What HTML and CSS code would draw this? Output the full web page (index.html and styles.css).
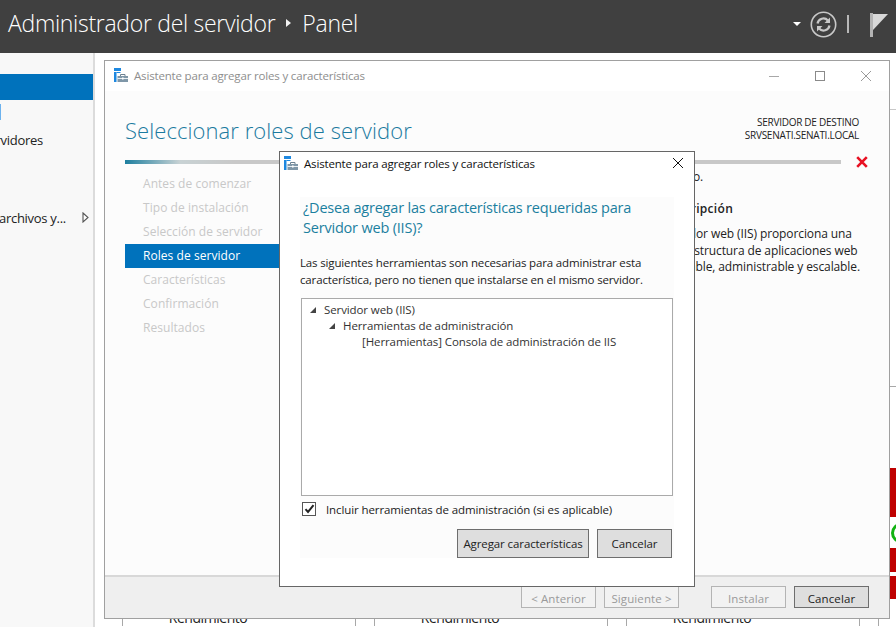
FILE: index.html
```html
<!DOCTYPE html>
<html lang="es">
<head>
<meta charset="utf-8">
<title>Administrador del servidor</title>
<link rel="stylesheet" href="styles.css">
</head>
<body>
<svg class="defs" width="0" height="0" aria-hidden="true">
  <symbol id="wizicon" viewBox="0 0 14 14">
    <rect x="0" y="0" width="7" height="3" fill="#1e88e0"/>
    <rect x="0" y="4" width="2.5" height="10" fill="#1e88e0"/>
    <rect x="2.5" y="4" width="4" height="1" fill="#1e88e0"/>
    <rect x="3.5" y="8" width="10.5" height="6" fill="#7f97a8"/>
    <rect x="3.5" y="10" width="10.5" height="1" fill="#e8eef2"/>
    <path d="M6.5 8V6.5h4.5V8" fill="none" stroke="#6d8292" stroke-width="1"/>
    <rect x="8" y="9.5" width="1.6" height="2" fill="#fff"/>
  </symbol>
</svg>

<header class="topbar">
  <div class="crumbs">
    <span class="crumb">Administrador del servidor</span>
    <span class="crumb-sep"></span>
    <span class="crumb">Panel</span>
  </div>
  <div class="tools">
    <span class="caret"></span>
    <svg class="refresh" width="27" height="27" viewBox="0 0 27 27">
      <circle cx="13.5" cy="13.5" r="12.2" fill="none" stroke="#c8c8c8" stroke-width="1.6"/>
      <path d="M7.5 12.5a6 6 0 0 1 10.4-3" fill="none" stroke="#c8c8c8" stroke-width="2.2"/>
      <path d="M20 6.5v5.5h-5.5z" fill="#c8c8c8"/>
      <path d="M19.5 14.5a6 6 0 0 1-10.4 3" fill="none" stroke="#c8c8c8" stroke-width="2.2"/>
      <path d="M7 20.5v-5.5h5.5z" fill="#c8c8c8"/>
    </svg>
    <span class="tool-sep"></span>
    <svg class="flag" width="18" height="25" viewBox="0 0 18 25">
      <rect x="0" y="0" width="3" height="24" fill="#b4b4b4"/>
      <path d="M3 1H18L3 17z" fill="#d8d8d8"/>
    </svg>
  </div>
</header>

<div class="workspace">
  <nav class="sidebar">
    <div class="side-row side-active"></div>
    <div class="side-row side-local"><span class="side-mark"></span></div>
    <div class="side-row side-text"><span class="side-label side-label-a">Todos los servidores</span></div>
    <div class="side-row side-text side-files">
      <span class="side-label side-label-b">Servicios de archivos y...</span>
      <svg class="side-arrow" width="7" height="11" viewBox="0 0 7 11"><path d="M1 1L6 5.5L1 10z" fill="#fff" stroke="#555" stroke-width="1.1"/></svg>
    </div>
  </nav>
  <main class="dashboard">
    <div class="dash-top"></div>
    <div class="tiles">
      <div class="tile"><div class="tile-name">Rendimiento</div></div>
      <div class="tile"><div class="tile-name">Rendimiento</div></div>
      <div class="tile"><div class="tile-name">Rendimiento</div></div>
      <div class="tile tile-status">
        <div class="st-red st-a"></div>
        <div class="st-ok"><span class="st-ring"></span></div>
        <div class="st-red st-b"></div>
        <div class="st-red st-c"></div>
      </div>
    </div>
  </main>
</div>

<section class="wizard">
  <div class="win-title">
    <svg class="win-icon" width="14" height="14"><use href="#wizicon"/></svg>
    <span class="win-caption">Asistente para agregar roles y características</span>
    <div class="win-controls">
      <svg width="12" height="12" viewBox="0 0 12 12"><path d="M1 6.5H11" stroke="#a8a8a8" fill="none"/></svg>
      <svg width="12" height="12" viewBox="0 0 12 12"><rect x="1.5" y="1.5" width="9" height="9" stroke="#8a8a8a" fill="none"/></svg>
      <svg width="12" height="12" viewBox="0 0 12 12"><path d="M1 1L11 11M11 1L1 11" stroke="#9a9a9a" fill="none"/></svg>
    </div>
  </div>
  <div class="win-body">
    <div class="head-row">
      <h1 class="page-title">Seleccionar roles de servidor</h1>
      <div class="target">SERVIDOR DE DESTINO<br>SRVSENATI.SENATI.LOCAL</div>
    </div>
    <div class="progress-row">
      <div class="progress"></div>
      <svg class="error-x" width="12" height="12" viewBox="0 0 12 12"><path d="M1.2 1.2L10.8 10.8M10.8 1.2L1.2 10.8" stroke="#e81123" stroke-width="2.6" fill="none"/></svg>
    </div>
    <div class="columns">
      <ul class="steps">
        <li>Antes de comenzar</li>
        <li>Tipo de instalación</li>
        <li>Selección de servidor</li>
        <li class="step-on">Roles de servidor</li>
        <li>Características</li>
        <li>Confirmación</li>
        <li>Resultados</li>
      </ul>
      <div class="desc">
        <p class="desc-line">Seleccione uno o varios roles para instalarlos en el servidor seleccionado.</p>
        <h2 class="desc-head">Descripción</h2>
        <p class="desc-text">Servidor web (IIS) proporciona una<br>infraestructura de aplicaciones web<br>confiable, administrable y escalable.</p>
      </div>
    </div>
  </div>
  <div class="win-foot">
    <button class="btn btn-off btn-prev">&lt; Anterior</button>
    <button class="btn btn-off btn-next">Siguiente &gt;</button>
    <button class="btn btn-off btn-inst">Instalar</button>
    <button class="btn btn-cancel">Cancelar</button>
  </div>
</section>

<section class="dialog">
  <div class="dlg-title">
    <svg class="dlg-icon" width="14" height="14"><use href="#wizicon"/></svg>
    <span class="dlg-caption">Asistente para agregar roles y características</span>
    <svg class="dlg-close" width="12" height="12" viewBox="0 0 12 12"><path d="M1 1L11 11M11 1L1 11" stroke="#111" fill="none"/></svg>
  </div>
  <div class="dlg-content">
    <h2 class="dlg-q">¿Desea agregar las características requeridas para Servidor web (IIS)?</h2>
    <p class="dlg-note">Las siguientes herramientas son necesarias para administrar esta<br>característica, pero no tienen que instalarse en el mismo servidor.</p>
    <div class="tree">
      <div class="node n0"><span class="twist"></span>Servidor web (IIS)</div>
      <div class="node n1"><span class="twist"></span>Herramientas de administración</div>
      <div class="node n2">[Herramientas] Consola de administración de IIS</div>
    </div>
    <label class="check">
      <span class="box"><svg width="11" height="10" viewBox="0 0 11 10"><path d="M1.5 5.2L4 8L9.5 1.2" stroke="#222" stroke-width="2" fill="none"/></svg></span>
      Incluir herramientas de administración (si es aplicable)
    </label>
    <div class="dlg-actions">
      <button class="btn btn-main btn-add">Agregar características</button>
      <button class="btn btn-main btn-dlg-cancel">Cancelar</button>
    </div>
  </div>
</section>
</body>
</html>
```

FILE: styles.css
```css
* { box-sizing: border-box; }
html, body { margin: 0; padding: 0; height: 100%; overflow: hidden; }
body {
  position: relative;
  width: 896px;
  height: 627px;
  background: #fff;
  font-family: "Open Sans", "Noto Sans", sans-serif;
  font-size: 12px;
  letter-spacing: 0.05px;
  color: #222;
}
.defs { position: absolute; }

.topbar {
  height: 53px;
  background: #404040;
  display: flex;
  align-items: center;
  justify-content: space-between;
  padding: 0 8px 7px 8px;
  color: #fff;
}
.crumbs { display: flex; align-items: center; }
.crumb { font-size: 23px; font-weight: 300; letter-spacing: -0.3px; }
.crumb-sep {
  width: 0; height: 0;
  margin: 0 11px 0 11px;
  border-left: 5px solid #f2f2f2;
  border-top: 4px solid transparent;
  border-bottom: 4px solid transparent;
}
.tools { display: flex; align-items: center; padding-top: 2px; }
.caret {
  width: 0; height: 0;
  border-top: 4px solid #fff;
  border-left: 4px solid transparent;
  border-right: 4px solid transparent;
  margin-right: 9px;
}
.tool-sep { width: 2px; height: 18px; background: #b8b8b8; margin: 0 21px 0 10px; }
.flag { margin-top: 2px; }

.workspace { display: flex; height: 574px; }
.sidebar {
  width: 95px;
  background: #f8f8f8;
  border-right: 2px solid #dcdcdc;
  padding-top: 21px;
  flex: none;
}
.side-row { height: 26px; position: relative; overflow: hidden; white-space: nowrap; }
.side-active { background: #0072bc; }
.side-local { height: 27px; padding-top: 4px; }
.side-mark { display: block; width: 1px; height: 16px; background: #6cb2ee; }
.side-text { font-size: 13px; letter-spacing: -0.28px; display: flex; align-items: center; justify-content: flex-end; }
.side-label { display: block; overflow: hidden; }
.side-label-a { position: absolute; right: 50px; }
.side-label-b { position: absolute; right: 27px; }
.side-files { margin-top: 52px; }
.side-arrow { position: absolute; left: 82px; top: 7px; }

.dashboard { flex: 1; padding-left: 27px; min-width: 0; overflow: hidden; }
.dash-top { height: 57px; border-bottom: 1px solid #c8c8c8; margin-left: 768px; }
.tiles { display: flex; gap: 18px; margin-top: 276px; height: 240px; }
.tile {
  flex: none;
  width: 234px;
  border: 1px solid #a8a8a8;
  border-width: 1px 1px 0;
  position: relative;
  overflow: hidden;
}
.tile-name { margin-top: 221px; width: 170px; text-align: center; font-size: 14px; letter-spacing: -0.45px; }
.tile-status { padding-top: 81px; }
.st-red { background: #bf0000; }
.st-a { height: 49px; }
.st-ok { height: 31px; padding: 6px 0 0 12px; }
.st-ring { display: block; width: 20px; height: 20px; border: 3px solid #12b312; border-radius: 50%; }
.st-b { height: 24px; }
.st-c { height: 23px; margin-top: 4px; }

.wizard {
  position: absolute;
  left: 104px; top: 60px;
  width: 786px; height: 559px;
  border: 1px solid #a0a0a0;
  background: #fcfcfc;
  display: flex;
  flex-direction: column;
}
.win-title { height: 30px; background: #fff; display: flex; align-items: center; padding: 0 0 2px 9px; flex: none; }
.win-caption { margin-left: 6px; font-size: 11.5px; color: #8e8e8e; letter-spacing: -0.17px; }
.win-controls { margin-left: auto; display: flex; gap: 34px; padding: 2px 17px 0 0; }
.win-body { flex: 1; padding: 0 20px; min-height: 0; }
.head-row { display: flex; justify-content: space-between; padding-top: 24px; height: 69px; }
.page-title { margin: 0; font-size: 22px; font-weight: 300; color: #1b7a9f; letter-spacing: 0.07px; line-height: 30px; }
.target { font-size: 10px; line-height: 13px; text-align: right; padding-top: 1px; color: #222; letter-spacing: -0.27px; margin-right: 10px; }
.progress-row { display: flex; align-items: center; height: 4px; }
.progress { width: 716px; height: 4px; background: linear-gradient(90deg, #1e7f9f 0, #c8d2d4 55px, #c8c8c8 110px, #c8c8c8 100%); flex: none; }
.error-x { margin-left: 15px; flex: none; }
.columns { display: flex; margin-top: 8px; }
.steps { list-style: none; margin: 0; padding: 0; width: 155px; flex: none; }
.steps li { height: 24px; line-height: 24px; padding-left: 18px; color: #c8c8c8; }
.step-on { background: #0072bc; color: #fff !important; }
.desc { width: 579px; flex: none; white-space: nowrap; position: relative; }
.desc-line { margin: -4px 0 0 -11px; width: 434px; text-align: right; line-height: 17px; letter-spacing: -0.2px; overflow: hidden; }
.desc-head { margin: 16px 0 0 382px; font-size: 12px; font-weight: 600; line-height: 16px; letter-spacing: 0.3px; }
.desc-text { margin: 9px 0 0 382px; font-size: 12px; line-height: 16.5px; letter-spacing: -0.1px; }

.win-foot {
  height: 43px;
  flex: none;
  background: #efefef;
  border-top: 2px solid #d8d8d8;
  display: flex;
  align-items: flex-start;
  padding: 9px 20px 0 0;
  justify-content: flex-end;
}
.btn {
  height: 22px;
  width: 75px;
  padding: 0;
  background: #f2f2f2;
  border: 1px solid #b4b4b4;
  color: #9a9a9a;
  font: inherit;
  font-size: 11.5px;
  letter-spacing: -0.1px;
}
.win-foot .btn { padding-top: 2px; letter-spacing: 0.1px; }
.btn-next { margin-left: 8px; }
.btn-inst { margin-left: 32px; }
.btn-cancel { margin-left: 8px; background: #dedede; border-color: #6e6e6e; color: #222; }

.dialog {
  position: absolute;
  left: 279px; top: 151px;
  width: 416px; height: 436px;
  background: #fff;
  border: 1px solid #666;
  display: flex;
  flex-direction: column;
}
.dlg-title { height: 24px; display: flex; align-items: center; padding: 0 10px 2px 4px; flex: none; }
.dlg-caption { margin-left: 6px; font-size: 11.5px; color: #111; letter-spacing: -0.17px; }
.dlg-close { margin-left: auto; }
.dlg-content { margin: 21px 20px 0; background: #fcfcfc; height: 361px; }
.dlg-q { margin: 0; padding: 1px 0 0 3px; font-size: 14.5px; font-weight: 400; line-height: 20px; color: #1b7f9f; letter-spacing: -0.2px; }
.dlg-note { margin: 17px 0 0; font-size: 11.5px; line-height: 16.5px; white-space: nowrap; letter-spacing: -0.15px; }
.tree {
  margin: 10px 1px 0;
  height: 198px;
  background: #fff;
  border: 1px solid #aaa;
  padding-top: 3px;
  font-size: 11.5px;
  color: #333;
  letter-spacing: -0.1px;
}
.node { height: 16px; line-height: 16px; display: flex; align-items: center; white-space: nowrap; }
.n0 { padding-left: 8px; }
.n1 { padding-left: 27px; }
.n2 { padding-left: 60px; }
.twist {
  width: 0; height: 0;
  margin-right: 8px;
  border-bottom: 6px solid #444;
  border-left: 6px solid transparent;
}
.check { display: flex; align-items: center; margin: 6px 0 0 2px; height: 14px; font-size: 11.5px; color: #222; letter-spacing: -0.1px; }
.box {
  width: 14px; height: 14px;
  border: 1px solid #555;
  background: #fff;
  margin-right: 10px;
  display: flex;
  align-items: center;
  justify-content: center;
  flex: none;
}
.dlg-actions { display: flex; justify-content: flex-end; gap: 8px; margin-top: 13px; padding-right: 2px; }
.btn-main { height: 29px; background: #dedede; border-color: #6e6e6e; color: #222; }
.btn-add { width: 132px; }
.btn-dlg-cancel { width: 75px; }
```
